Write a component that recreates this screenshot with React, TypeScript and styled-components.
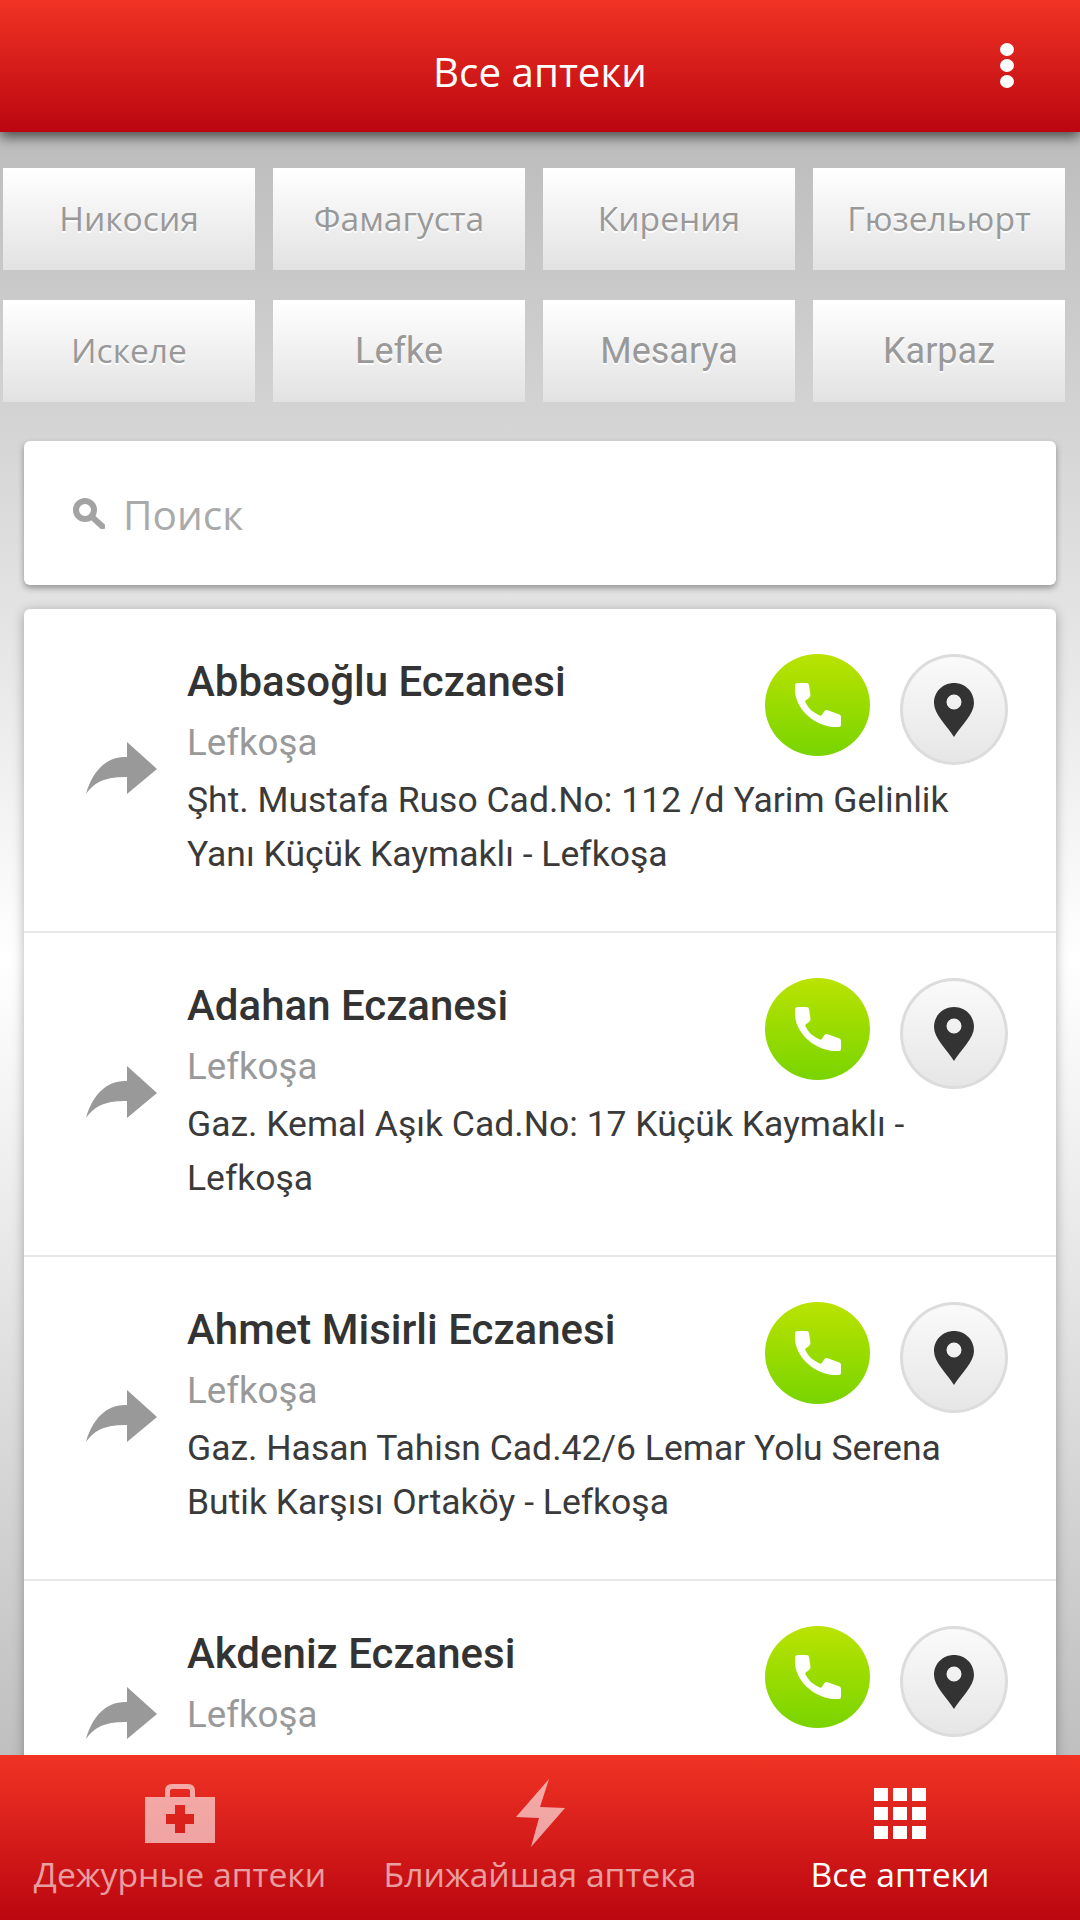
import React from "react";
import styled, { createGlobalStyle } from "styled-components";

const Global = createGlobalStyle`
  html, body { margin: 0; padding: 0; height: 100%; }
  #root { height: 100%; }
  * { box-sizing: border-box; }
`;

const LATIN = `Roboto, "Liberation Sans", sans-serif`;
const CYR = `"Open Sans", "Noto Sans", sans-serif`;
const RED = "linear-gradient(180deg, #f03324 0%, #bb0610 100%)";

const Page = styled.div`
  height: 1920px;
  display: flex;
  flex-direction: column;
  overflow: hidden;
  background: linear-gradient(180deg, #b2b2b2 0%, #ffffff 50%, #b2b2b2 100%);
  font-family: ${LATIN};
`;

const Header = styled.header`
  flex: none;
  height: 132px;
  padding-top: 12px;
  position: relative;
  z-index: 2;
  display: flex;
  align-items: center;
  justify-content: center;
  background: ${RED};
  box-shadow: 0 5px 12px rgba(0, 0, 0, 0.6);
`;

const Title = styled.h1`
  margin: 0;
  font: 400 40.3px/1 ${CYR};
  color: #fff;
`;

const Kebab = styled.div`
  position: absolute;
  right: 66px;
  top: 43px;
  display: flex;
  flex-direction: column;
  gap: 3px;
`;

const Dot = styled.span`
  width: 14px;
  height: 13px;
  border-radius: 50%;
  background: #fff;
`;

const Main = styled.main`
  flex: 1;
  min-height: 0;
  overflow: hidden;
`;

const Cities = styled.div`
  display: grid;
  grid-template-columns: repeat(4, 252px);
  column-gap: 18px;
  row-gap: 30px;
  padding: 36px 15px 0 3px;
`;

const City = styled.button<{ $cyr?: boolean }>`
  height: 102px;
  border: 0;
  padding: 0;
  background: linear-gradient(180deg, #ffffff 0%, #e2e2e2 100%);
  color: #999;
  font: 400 ${(p) => (p.$cyr ? "33.6px" : "36px")}/1 ${(p) => (p.$cyr ? CYR : LATIN)};
  text-shadow: 0 2px 0 #fff;
`;

const Search = styled.div`
  height: 144px;
  margin: 39px 24px 0;
  padding: 0 0 0 49px;
  display: flex;
  align-items: center;
  gap: 18px;
  background: #fff;
  border-radius: 6px;
  box-shadow: 0 3px 6px rgba(0, 0, 0, 0.35);
`;

const SearchText = styled.span`
  position: relative;
  top: 2px;
  font: 400 40.6px/1 ${CYR};
  color: #aaa;
`;

const List = styled.section`
  margin: 24px 24px 0;
  background: #fff;
  border-radius: 6px 6px 0 0;
  box-shadow: 0 2px 12px rgba(0, 0, 0, 0.3);
`;

const Row = styled.article`
  display: flex;
  align-items: center;
  padding: 45px 48px 50px 61px;
  gap: 29px;
  border-bottom: 2px solid #e8e8e8;
`;

const Body = styled.div`
  flex: 1;
  min-width: 0;
`;

const Head = styled.div`
  display: flex;
  justify-content: space-between;
  align-items: flex-start;
  margin-bottom: 8px;
`;

const Name = styled.h2`
  margin: 1px 0 12px;
  font: 500 42px/54px ${LATIN};
  color: #333;
`;

const District = styled.div`
  font: 400 36.7px/44px ${LATIN};
  color: #999;
`;

const Address = styled.p`
  margin: 0;
  min-height: 54px;
  font: 400 35.5px/54px ${LATIN};
  color: #3a3a3a;
`;

const Actions = styled.div`
  flex: none;
  display: flex;
  align-items: flex-start;
  gap: 30px;
`;

const PhoneButton = styled.div`
  width: 105px;
  height: 102px;
  border-radius: 50%;
  display: flex;
  align-items: center;
  justify-content: center;
  background: linear-gradient(180deg, #bae300 0%, #78d400 100%);
`;

const PinButton = styled.div`
  width: 108px;
  height: 111px;
  border-radius: 50%;
  border: 3px solid #dcdcdc;
  display: flex;
  align-items: center;
  justify-content: center;
  background: linear-gradient(180deg, #fafafa 0%, #e6e6e6 100%);
`;

const Nav = styled.nav`
  flex: none;
  height: 165px;
  position: relative;
  z-index: 2;
  display: grid;
  grid-template-columns: repeat(3, 360px);
  background: ${RED};
`;

const NavItem = styled.div<{ $active?: boolean }>`
  display: flex;
  flex-direction: column;
  align-items: center;
  padding-top: 24px;
  color: ${(p) => (p.$active ? "#fff" : "rgba(255, 255, 255, 0.6)")};
`;

const NavIcon = styled.div`
  height: 68px;
  display: flex;
  align-items: center;
  justify-content: center;
`;

const NavLabel = styled.span`
  margin-top: 7px;
  font: 400 33.7px/40px ${CYR};
  white-space: nowrap;
`;

const KebabIcon = () => (
  <Kebab>
    <Dot />
    <Dot />
    <Dot />
  </Kebab>
);

const SearchIcon = () => (
  <svg width="32" height="31" viewBox="0 0 32 31" fill="none" stroke="#a3a3a3" strokeWidth="6">
    <circle cx="12" cy="12" r="9" />
    <path d="M18.5 18.5 L29.5 28.5" strokeLinecap="round" />
  </svg>
);

const ArrowIcon = () => (
  <svg width="73" height="52" viewBox="0 0 71 52" fill="#999" style={{ flex: "none" }}>
    <path d="M41 0 L71 27 L41 52 V35 C22 35 10 38 0 52 C6 30 20 14 41 15 Z" />
  </svg>
);

const PhoneIcon = () => (
  <svg width="46" height="46" viewBox="0 0 46 46" fill="#fff">
    <path d="M3 1 H12 Q13.5 1 14 3 L15.5 13 Q15.5 15 14 16 L10 19 C13 27 19 31 26 34 L29.5 29 Q30.5 27.5 32 28 L44.5 32.5 Q46 33 46 35 V43 Q46 45 44 45 H38 C17 43 0 25 0 8 V4 Q0 1 3 1 Z" />
  </svg>
);

const PinIcon = () => (
  <svg width="40" height="54" viewBox="0 0 40 54">
    <path
      fill="#333"
      fillRule="evenodd"
      d="M20 0 C9 0 0 8.5 0 20 C0 31 13 43 20 54 C27 43 40 31 40 20 C40 8.5 31 0 20 0 Z M20 11.5 A7.5 7.5 0 1 1 20 26.5 A7.5 7.5 0 1 1 20 11.5 Z"
    />
  </svg>
);

const CaseIcon = () => (
  <svg width="70" height="59" viewBox="0 0 70 59" fill="currentColor">
    <path
      fillRule="evenodd"
      d="M0 13 H70 V59 H0 Z M30 21 V30 H21 V40 H30 V49 H40 V40 H49 V30 H40 V21 Z"
    />
    <path fill="none" stroke="currentColor" strokeWidth="5" d="M22.5 13 V7 Q22.5 2.5 27 2.5 H43 Q47.5 2.5 47.5 7 V13" />
  </svg>
);

const BoltIcon = () => (
  <svg width="49" height="68" viewBox="0 0 49 68" fill="currentColor">
    <path d="M33 0 L24 28 L49 29 L15 68 L23 39 L0 38 Z" />
  </svg>
);

const GridIcon = () => (
  <svg width="52" height="51" viewBox="0 0 52 51" fill="currentColor">
    {[0, 19, 38].flatMap((y) =>
      [0, 19, 38].map((x) => <rect key={`${x}-${y}`} x={x} y={y} width="14" height="13" />)
    )}
  </svg>
);

const cities: { label: string; cyr?: boolean }[] = [
  { label: "Никосия", cyr: true },
  { label: "Фамагуста", cyr: true },
  { label: "Кирения", cyr: true },
  { label: "Гюзельюрт", cyr: true },
  { label: "Искеле", cyr: true },
  { label: "Lefke" },
  { label: "Mesarya" },
  { label: "Karpaz" },
];

const pharmacies = [
  {
    name: "Abbasoğlu Eczanesi",
    district: "Lefkoşa",
    address: "Şht. Mustafa Ruso Cad.No: 112 /d Yarim Gelinlik Yanı Küçük Kaymaklı - Lefkoşa",
  },
  {
    name: "Adahan Eczanesi",
    district: "Lefkoşa",
    address: "Gaz. Kemal Aşık Cad.No: 17 Küçük Kaymaklı - Lefkoşa",
  },
  {
    name: "Ahmet Misirli Eczanesi",
    district: "Lefkoşa",
    address: "Gaz. Hasan Tahisn Cad.42/6 Lemar Yolu Serena Butik Karşısı Ortaköy - Lefkoşa",
  },
  { name: "Akdeniz Eczanesi", district: "Lefkoşa", address: "" },
];

export default function App() {
  return (
    <Page>
      <Global />
      <Header>
        <Title>Все аптеки</Title>
        <KebabIcon />
      </Header>
      <Main>
        <Cities>
          {cities.map((c) => (
            <City key={c.label} $cyr={c.cyr}>
              {c.label}
            </City>
          ))}
        </Cities>
        <Search>
          <SearchIcon />
          <SearchText>Поиск</SearchText>
        </Search>
        <List>
          {pharmacies.map((p) => (
            <Row key={p.name}>
              <ArrowIcon />
              <Body>
                <Head>
                  <div>
                    <Name>{p.name}</Name>
                    <District>{p.district}</District>
                  </div>
                  <Actions>
                    <PhoneButton>
                      <PhoneIcon />
                    </PhoneButton>
                    <PinButton>
                      <PinIcon />
                    </PinButton>
                  </Actions>
                </Head>
                <Address>{p.address}</Address>
              </Body>
            </Row>
          ))}
        </List>
      </Main>
      <Nav>
        <NavItem>
          <NavIcon>
            <CaseIcon />
          </NavIcon>
          <NavLabel>Дежурные аптеки</NavLabel>
        </NavItem>
        <NavItem>
          <NavIcon>
            <BoltIcon />
          </NavIcon>
          <NavLabel>Ближайшая аптека</NavLabel>
        </NavItem>
        <NavItem $active>
          <NavIcon>
            <GridIcon />
          </NavIcon>
          <NavLabel>Все аптеки</NavLabel>
        </NavItem>
      </Nav>
    </Page>
  );
}
